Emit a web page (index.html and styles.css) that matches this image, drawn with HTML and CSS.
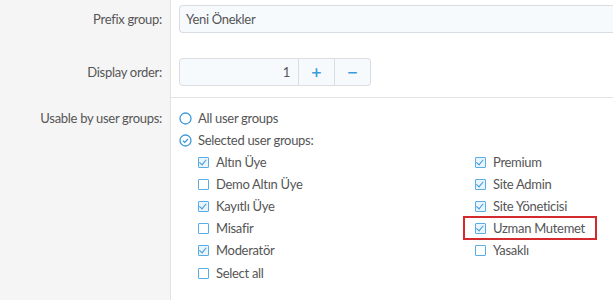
FILE: index.html
```html
<!DOCTYPE html>
<html lang="en">
<head>
    <meta charset="UTF-8">
    <title>Prefix</title>
    <link rel="stylesheet" href="styles.css">
</head>
<body>
    <div class="form">
        <!-- Prefix group -->
        <div class="label first">Prefix group:</div>
        <div class="control first">
            <div class="input">Yeni Önekler</div>
        </div>

        <!-- Display order -->
        <div class="label">Display order:</div>
        <div class="control sep">
            <div class="spinner">
                <div class="input number">1</div>
                <button class="spin">+</button>
                <button class="spin">&minus;</button>
            </div>
        </div>

        <!-- Usable by -->
        <div class="label groups-label">Usable by user groups:</div>
        <div class="control groups">
            <div class="radio">
                <svg width="13" height="13" viewBox="0 0 13 13"><circle cx="6.5" cy="6.5" r="5.5" fill="none" stroke="#3d9ad9" stroke-width="1.3"/></svg>
                All user groups
            </div>
            <div class="radio">
                <svg width="13" height="13" viewBox="0 0 13 13"><circle cx="6.5" cy="6.5" r="5.5" fill="none" stroke="#3d9ad9" stroke-width="1.3"/><path d="M4 6.7l1.7 1.7 3.3-3.4" fill="none" stroke="#3d9ad9" stroke-width="1.3"/></svg>
                Selected user groups:
            </div>
            <div class="checks">
                <div class="col">
                    <div class="check on"><span class="box"></span>Altın Üye</div>
                    <div class="check"><span class="box"></span>Demo Altın Üye</div>
                    <div class="check on"><span class="box"></span>Kayıtlı Üye</div>
                    <div class="check"><span class="box"></span>Misafir</div>
                    <div class="check on"><span class="box"></span>Moderatör</div>
                    <div class="check all"><span class="box"></span>Select all</div>
                </div>
                <div class="col">
                    <div class="check on"><span class="box"></span>Premium</div>
                    <div class="check on"><span class="box"></span>Site Admin</div>
                    <div class="check on"><span class="box"></span>Site Yöneticisi</div>
                    <div class="check on marked"><span class="box"></span>Uzman Mutemet</div>
                    <div class="check"><span class="box"></span>Yasaklı</div>
                </div>
            </div>
        </div>
    </div>
</body>
</html>
```

FILE: styles.css
```css
body {
    margin: 0;
    font-family: Lato, "Open Sans", sans-serif;
    font-size: 13px;
    letter-spacing: -0.3px;
    color: #555;
    background: #fff;
    height: 300px;
    overflow: hidden;
}
.form {
    display: grid;
    grid-template-columns: 171px 1fr;
    grid-template-rows: auto auto 1fr;
    height: 300px;
}
.label {
    background: #f5f5f5;
    border-right: 1px solid #e3e3e3;
    text-align: right;
    padding: 25px 8px 0 0;
    line-height: 28px;
}
.label.first {
    padding-top: 5px;
}
.control {
    padding: 25px 0 0 8px;
}
.control.first {
    padding-top: 5px;
}
.control.sep {
    padding-bottom: 11px;
    border-bottom: 1px solid #e3e3e3;
}
.input {
    height: 26px;
    line-height: 26px;
    border: 1px solid #d8dde3;
    border-right: none;
    border-radius: 4px 0 0 4px;
    background: #f7fafd;
    padding: 0 8px 0 6px;
}
.spinner {
    display: flex;
    width: 192px;
}
.input.number {
    flex: 1;
    text-align: right;
    border-right: 1px solid #d8dde3;
}
.spin {
    box-sizing: border-box;
    width: 36px;
    height: 28px;
    border: 1px solid #d8dde3;
    border-left: none;
    background: #f7fafd;
    color: #3d9ad9;
    font-family: "Open Sans", sans-serif;
    font-size: 18px;
    font-weight: 600;
    padding: 0;
    line-height: 24px;
}
.spin:last-child {
    border-radius: 0 4px 4px 0;
}
.groups-label {
    padding-top: 9px;
    line-height: 22px;
}
.control.groups {
    padding-top: 9px;
}
.radio {
    display: flex;
    align-items: center;
    gap: 6px;
    height: 22px;
}
.checks {
    display: flex;
    padding-left: 19px;
}
.col {
    width: 277px;
}
.check {
    display: flex;
    align-items: center;
    gap: 7px;
    height: 22px;
    position: relative;
    width: max-content;
}
.check.all {
    margin-top: 1px;
}
.box {
    width: 9px;
    height: 9px;
    border: 1.5px solid #5aace4;
    border-radius: 1px;
    background: #fff;
    position: relative;
}
.check.on .box {
    background: #eaf4fc;
}
.check.on .box::after {
    content: "";
    position: absolute;
    left: 2px;
    top: 0.5px;
    width: 3px;
    height: 5.5px;
    border: solid #3d9ad9;
    border-width: 0 1.5px 1.5px 0;
    transform: rotate(40deg);
}
.check.marked::before {
    content: "";
    position: absolute;
    box-sizing: border-box;
    left: -12px;
    width: 134px;
    top: -1px;
    bottom: -1px;
    border: 2px solid #d42a2e;
}
```
